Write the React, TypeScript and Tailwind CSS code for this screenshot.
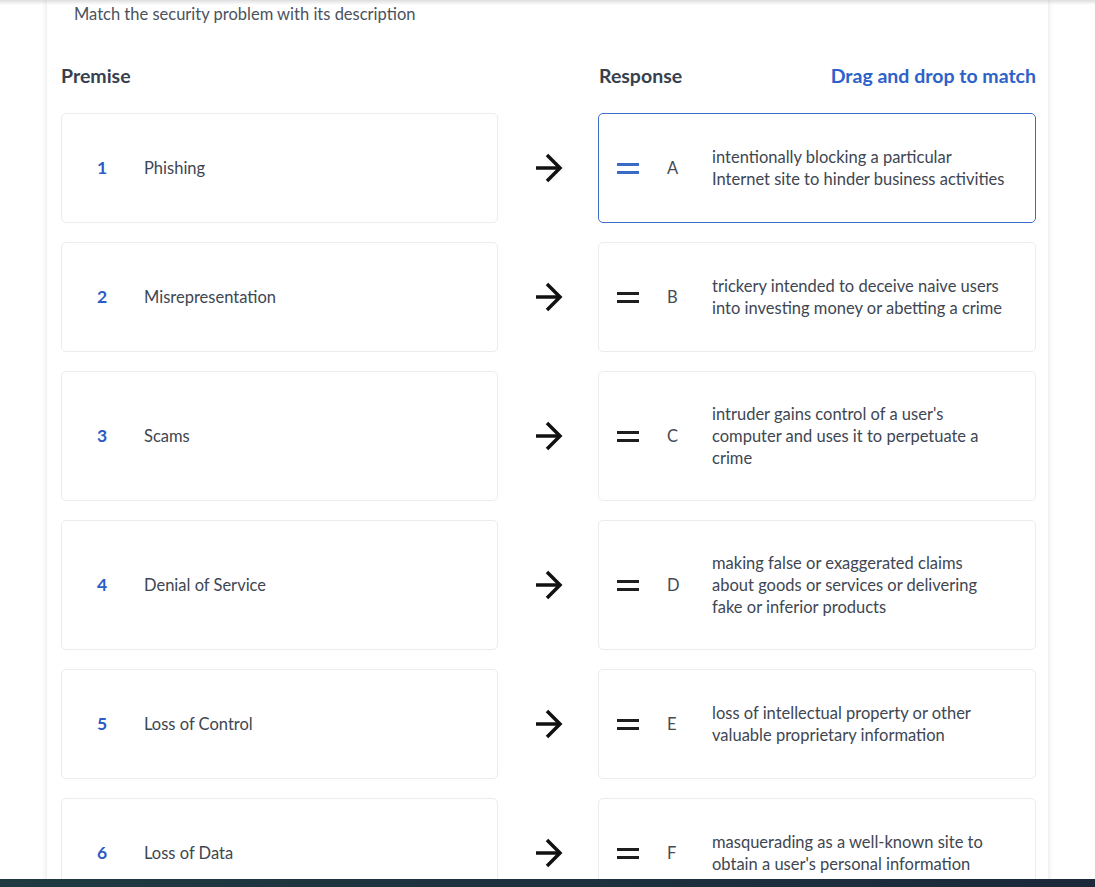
import React from "react";

const pairs = [
  { n: 1, premise: "Phishing", letter: "A", response: "intentionally blocking a particular Internet site to hinder business activities" },
  { n: 2, premise: "Misrepresentation", letter: "B", response: "trickery intended to deceive naive users into investing money or abetting a crime" },
  { n: 3, premise: "Scams", letter: "C", response: "intruder gains control of a user's computer and uses it to perpetuate a crime" },
  { n: 4, premise: "Denial of Service", letter: "D", response: "making false or exaggerated claims about goods or services or delivering fake or inferior products" },
  { n: 5, premise: "Loss of Control", letter: "E", response: "loss of intellectual property or other valuable proprietary information" },
  { n: 6, premise: "Loss of Data", letter: "F", response: "masquerading as a well-known site to obtain a user's personal information" },
];

const Arrow = () => (
  <svg width="30" height="30" viewBox="0 0 30 30" fill="none" stroke="#111" strokeWidth="3.5" strokeLinecap="butt" strokeLinejoin="miter">
    <path d="M3 15H27" />
    <path d="M14 2L27 15L14 28" />
  </svg>
);

const Handle = ({ active }: { active: boolean }) => (
  <div className="flex w-[22px] flex-col gap-[5px]">
    <div className={`h-[3px] w-full ${active ? "bg-[#3a6cc6]" : "bg-[#1e1e1e]"}`} />
    <div className={`h-[3px] w-full ${active ? "bg-[#3a6cc6]" : "bg-[#1e1e1e]"}`} />
  </div>
);

export default function App() {
  return (
    <div className="min-h-screen bg-white font-['Lato','Liberation_Sans',sans-serif] text-[16.5px] leading-[22px] text-[#3e4652]">
      <div className="fixed inset-x-0 top-0 h-[5px] bg-gradient-to-b from-[rgba(0,0,0,0.13)] to-transparent" />

      <div className="mx-auto w-[1001px] bg-white pb-10 pl-[14px] pr-[12px] pt-[3px] shadow-[0_0_6px_rgba(0,0,0,0.13)]">
        <p className="pl-[13px] text-[#4a525e]">Match the security problem with its description</p>

        <div className="mt-[40px] grid grid-cols-[437px_100px_1fr] items-center">
          <h2 className="text-[19.5px] font-bold text-[#37414e]">Premise</h2>
          <div />
          <div className="flex items-center justify-between">
            <h2 className="pl-px text-[19.5px] font-bold text-[#37414e]">Response</h2>
            <span className="text-[19.5px] font-bold text-[#2d62c8]">Drag and drop to match</span>
          </div>
        </div>

        <div className="mt-[26px] flex flex-col gap-[19px]">
          {pairs.map((p) => (
            <div key={p.n} className="grid grid-cols-[437px_100px_1fr]">
              <div className="flex min-h-[110px] items-center rounded-[5px] border border-[#eaecef] bg-white pl-[35px]">
                <span className="w-[47px] text-[17.5px] font-bold text-[#2b5cc7]">{p.n}</span>
                <span>{p.premise}</span>
              </div>
              <div className="flex items-center justify-center">
                <Arrow />
              </div>
              <div
                className={`flex min-h-[110px] items-center rounded-[5px] border bg-white py-[31px] pl-[18px] ${
                  p.n === 1 ? "border-[#3d6fc4]" : "border-[#eaecef]"
                }`}
              >
                <Handle active={p.n === 1} />
                <span className="ml-[28px] w-[45px] text-[#444b55]">{p.letter}</span>
                <span className="w-[295px]">{p.response}</span>
              </div>
            </div>
          ))}
        </div>
      </div>

      <div className="fixed inset-x-0 bottom-0 h-[8px] bg-gradient-to-r from-[#1f3a42] to-[#1b293b]" />
    </div>
  );
}
